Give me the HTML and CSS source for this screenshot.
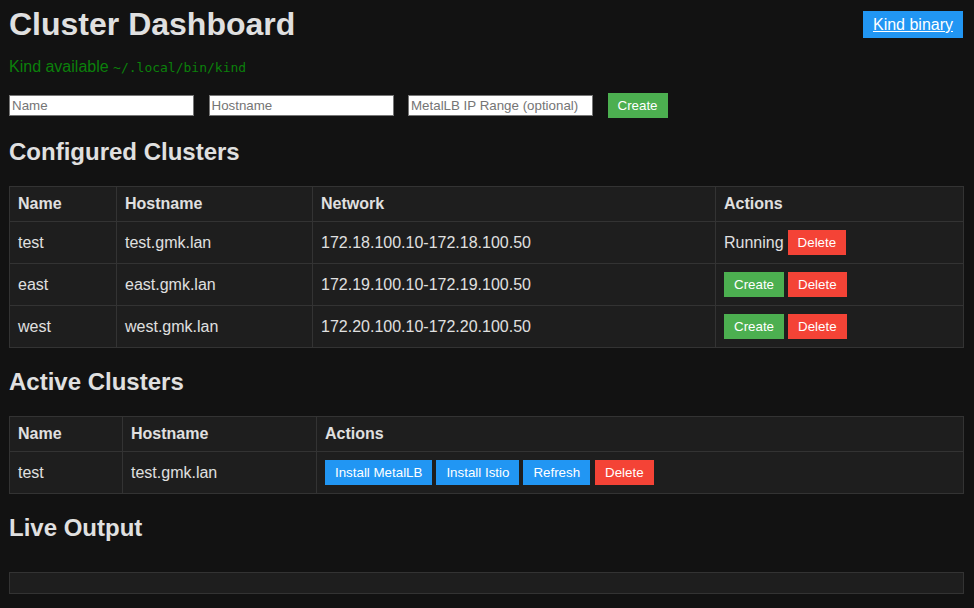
FILE: index.html
```html
<!DOCTYPE html>
<html lang="en">
<head>
<meta charset="utf-8">
<title>Cluster Dashboard</title>
<link rel="stylesheet" href="styles.css">
</head>
<body>
<header class="top">
  <h1 class="title">Cluster Dashboard</h1>
  <a class="kind-link" href="#">Kind binary</a>
</header>
<p class="status">Kind available <code class="path">~/.local/bin/kind</code></p>
<form class="new-cluster">
  <input class="field" type="text" placeholder="Name">
  <input class="field" type="text" placeholder="Hostname">
  <input class="field" type="text" placeholder="MetalLB IP Range (optional)">
  <button class="btn btn-green" type="button">Create</button>
</form>

<h2 class="section">Configured Clusters</h2>
<table class="grid">
  <colgroup>
    <col class="c-name1"><col class="c-host1"><col class="c-net1"><col>
  </colgroup>
  <thead>
    <tr><th>Name</th><th>Hostname</th><th>Network</th><th>Actions</th></tr>
  </thead>
  <tbody>
    <tr>
      <td>test</td><td>test.gmk.lan</td><td>172.18.100.10-172.18.100.50</td>
      <td><div class="actions"><span class="state">Running</span><button class="btn btn-red" type="button">Delete</button></div></td>
    </tr>
    <tr>
      <td>east</td><td>east.gmk.lan</td><td>172.19.100.10-172.19.100.50</td>
      <td><div class="actions"><button class="btn btn-green" type="button">Create</button><button class="btn btn-red" type="button">Delete</button></div></td>
    </tr>
    <tr>
      <td>west</td><td>west.gmk.lan</td><td>172.20.100.10-172.20.100.50</td>
      <td><div class="actions"><button class="btn btn-green" type="button">Create</button><button class="btn btn-red" type="button">Delete</button></div></td>
    </tr>
  </tbody>
</table>

<h2 class="section">Active Clusters</h2>
<table class="grid">
  <colgroup>
    <col class="c-name2"><col class="c-host2"><col>
  </colgroup>
  <thead>
    <tr><th>Name</th><th>Hostname</th><th>Actions</th></tr>
  </thead>
  <tbody>
    <tr>
      <td>test</td><td>test.gmk.lan</td>
      <td><div class="actions"><button class="btn btn-blue" type="button">Install MetalLB</button><button class="btn btn-blue" type="button">Install Istio</button><button class="btn btn-blue" type="button">Refresh</button><button class="btn btn-red btn-sep" type="button">Delete</button></div></td>
    </tr>
  </tbody>
</table>

<h2 class="section">Live Output</h2>
<pre class="output"></pre>
</body>
</html>
```

FILE: styles.css
```css
html, body {
  background: #121212;
}
body {
  margin: 0;
  padding: 6px 10px 0 9px;
  color: #e0e0e0;
  font-family: "Liberation Sans", Arial, sans-serif;
  font-size: 16px;
}
.top {
  display: flex;
  justify-content: space-between;
  align-items: center;
}
.title {
  margin: 0;
  font-size: 32px;
  line-height: 37px;
  font-weight: bold;
}
.kind-link {
  display: inline-block;
  margin-right: 1px;
  padding: 4px 10px;
  line-height: 19px;
  background: #2196f3;
  color: #ffffff;
  text-decoration: underline;
  font-size: 16px;
}
.status {
  margin: 15px 0 0;
  line-height: 18px;
  color: #0b800b;
}
.path {
  font-family: "DejaVu Sans Mono", monospace;
  font-size: 13px;
}
.new-cluster {
  margin: 16px 0 0;
  display: flex;
  align-items: center;
  gap: 14.5px;
}
.field {
  box-sizing: border-box;
  width: 185px;
  height: 21px;
  margin: 0;
  padding: 1px 2px;
  border: 1px solid #767676;
  background: #ffffff;
  color: #000000;
  font-family: "Liberation Sans", Arial, sans-serif;
  font-size: 13.333px;
}
.field::placeholder {
  color: #757575;
}
.btn {
  margin: 0;
  padding: 5px 10px;
  border: 0;
  color: #ffffff;
  font-family: "Liberation Sans", Arial, sans-serif;
  font-size: 13.333px;
  line-height: 15px;
  cursor: pointer;
}
.btn-green { background: #4caf50; }
.btn-red { background: #f44336; }
.btn-blue { background: #2196f3; }
.btn-sep { margin-left: 1px; }
.section {
  margin: 20px 0;
  font-size: 24px;
  line-height: 28px;
  font-weight: bold;
}
.grid {
  width: 100%;
  border-collapse: collapse;
  background: #1e1e1e;
  table-layout: fixed;
}
.grid th,
.grid td {
  border: 1px solid #333333;
  padding: 8px;
  text-align: left;
  vertical-align: middle;
  line-height: 18px;
}
.grid th {
  font-weight: bold;
}
.c-name1 { width: 107px; }
.c-host1 { width: 196px; }
.c-net1 { width: 403px; }
.c-name2 { width: 113px; }
.c-host2 { width: 194px; }
.actions {
  display: flex;
  align-items: center;
  gap: 4px;
}
.output {
  margin: 30px 0 0;
  box-sizing: border-box;
  height: 22px;
  padding: 10px;
  background: #1e1e1e;
  border: 1px solid #333333;
}
```
